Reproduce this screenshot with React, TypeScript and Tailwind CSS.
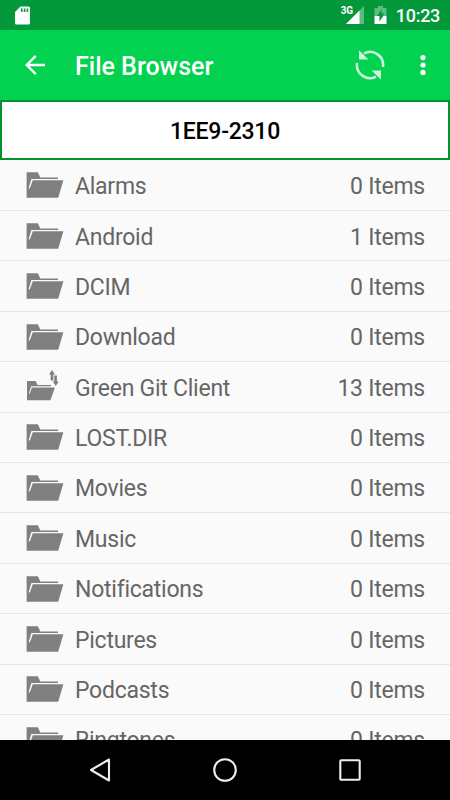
import { useState } from "react";

interface Folder {
  name: string;
  items: number;
  repo?: boolean;
}

function FolderIcon() {
  return (
    <svg width="38" height="28" viewBox="0 0 38 28" fill="#808080">
      <path d="M.6 1.3H11.8L14.3 6.4H32V7.9H5.4L2.6 17.2L3.8 17.6L6.8 9.3H37.4L32.2 26.7H.6Z" />
    </svg>
  );
}

function RepoIcon() {
  return (
    <svg width="38" height="34" viewBox="0 0 38 34" className="-mt-1" fill="#808080">
      <path d="M1 13H9.6L11.6 17H25V18.2H5.2L2.8 25.5L3.7 25.8L5.9 19.4H29L24.4 32.2H1Z" />
      <path d="M26 2L29 6.4H27.3V12.4H24.7V6.4H23ZM28.3 7.4H30.9V13.6H32.8L29.8 18L26.7 13.6H28.3Z" />
    </svg>
  );
}

function StatusBar() {
  return (
    <div className="flex h-[30px] shrink-0 items-center bg-[#03983a] pl-[15px] pr-[10px] text-white">
      <svg width="15" height="19" viewBox="0 0 15 19">
        <path
          fill="#fff"
          fillRule="evenodd"
          d="M5.5.5H13.5Q15 .5 15 2V17Q15 18.5 13.5 18.5H1.5Q0 18.5 0 17V6ZM6 2.6V6H7.6V2.6ZM8.8 2.6V6H10.4V2.6ZM11.6 2.6V6H13.2V2.6Z"
        />
      </svg>
      <div className="ml-auto flex items-center">
        <span className="mb-[9px] mr-[-7px] text-[10px] font-bold leading-none tracking-[-0.3px]">
          3G
        </span>
        <svg width="18" height="18" viewBox="0 0 18 18" className="mr-[10px]">
          <path d="M18 0V18H0Z" fill="#fff" fillOpacity=".35" />
          <path d="M13.5 4.5V18H0Z" fill="#fff" />
        </svg>
        <svg width="13" height="18" viewBox="0 0 13 18" className="mr-[9px]">
          <path
            d="M4 0H9V2H12.5V10H9L10 7.5H7.6V3.5L3 10H.5V2H4Z"
            fill="#fff"
            fillOpacity=".35"
          />
          <path d="M.5 10H5.4V15.5L9.2 10H12.5V18H.5Z" fill="#fff" />
        </svg>
        <span className="pt-px text-[18px] font-medium leading-none tracking-[-0.3px]">
          10:23
        </span>
      </div>
    </div>
  );
}

function AppBar() {
  return (
    <div className="flex h-[70px] shrink-0 items-center bg-[#02d24f] text-white">
      <svg
        width="20"
        height="20"
        viewBox="0 0 20 20"
        className="ml-[25px]"
        fill="none"
        stroke="#fff"
        strokeWidth="2.4"
      >
        <path d="M20 10H2M10.8 .9L1.7 10L10.8 19.1" />
      </svg>
      <h1 className="ml-[30px] pt-0.5 text-[25px] font-medium leading-none">
        File Browser
      </h1>
      <svg
        width="30"
        height="30"
        viewBox="0 0 30 30"
        className="ml-auto"
        fill="none"
        stroke="#ccf6dc"
        strokeWidth="2.6"
      >
        <path d="M9 3.4A13 13 0 0 1 27.9 17M21 26.6A13 13 0 0 1 2.1 13" />
        <path d="M4 .3V9.6H13.4ZM26 29.7V20.4H16.6Z" fill="#ccf6dc" stroke="none" />
      </svg>
      <svg width="6" height="20" viewBox="0 0 6 20" className="ml-[35px] mr-[24px]" fill="#fff">
        <circle cx="3" cy="2.6" r="2.6" />
        <circle cx="3" cy="10" r="2.6" />
        <circle cx="3" cy="17.4" r="2.6" />
      </svg>
    </div>
  );
}

function NavBar() {
  return (
    <div className="flex h-[60px] shrink-0 items-center justify-center gap-[101px] bg-black">
      <svg width="24" height="24" viewBox="0 0 24 24" fill="none" stroke="#eee" strokeWidth="2.1" strokeLinejoin="round">
        <path d="M21 1.5V22.5L3 12Z" />
      </svg>
      <svg width="24" height="24" viewBox="0 0 24 24" fill="none" stroke="#eee" strokeWidth="2.1">
        <circle cx="12" cy="12" r="10.8" />
      </svg>
      <svg width="24" height="24" viewBox="0 0 24 24" fill="none" stroke="#eee" strokeWidth="2.1">
        <rect x="2.3" y="2.3" width="19.4" height="19.4" rx="1" />
      </svg>
    </div>
  );
}

function App() {
  const [folders] = useState<Folder[]>([
    { name: "Alarms", items: 0 },
    { name: "Android", items: 1 },
    { name: "DCIM", items: 0 },
    { name: "Download", items: 0 },
    { name: "Green Git Client", items: 13, repo: true },
    { name: "LOST.DIR", items: 0 },
    { name: "Movies", items: 0 },
    { name: "Music", items: 0 },
    { name: "Notifications", items: 0 },
    { name: "Pictures", items: 0 },
    { name: "Podcasts", items: 0 },
    { name: "Ringtones", items: 0 },
  ]);

  return (
    <div className="flex h-[800px] w-[450px] flex-col overflow-hidden bg-[#fafafa] font-[Roboto,sans-serif]">
      <StatusBar />
      <AppBar />
      <div className="flex h-[60px] shrink-0 items-center justify-center border-2 border-[#03912c] bg-white pt-[5px] text-[23px] font-medium tracking-[-0.25px] text-black">
        1EE9-2310
      </div>
      <ul className="min-h-0 flex-1 overflow-hidden pt-[0.7px]">
        {folders.map((folder) => (
          <li
            key={folder.name}
            className="flex h-[50.4px] items-center border-b border-[#e6e6e6] pl-[26px] pr-[25px] text-[23px] tracking-[-0.25px] text-[#666]"
          >
            <div className="flex w-[49px] items-center">
              {folder.repo ? <RepoIcon /> : <FolderIcon />}
            </div>
            <span className="pt-[4px]">{folder.name}</span>
            <span className="ml-auto pt-[4px]">{folder.items} Items</span>
          </li>
        ))}
      </ul>
      <NavBar />
    </div>
  );
}

export default App;
